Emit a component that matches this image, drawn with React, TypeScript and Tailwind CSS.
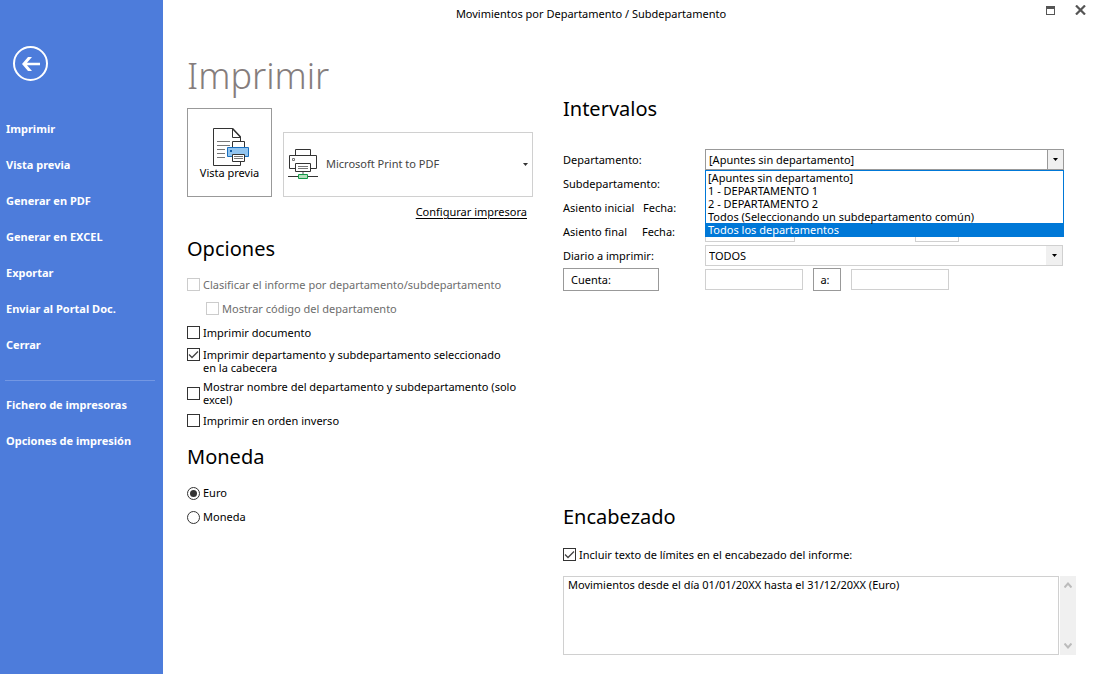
import React, { useState } from "react";

const menuItems = [
  "Imprimir",
  "Vista previa",
  "Generar en PDF",
  "Generar en EXCEL",
  "Exportar",
  "Enviar al Portal Doc.",
  "Cerrar",
];

const settingsItems = ["Fichero de impresoras", "Opciones de impresión"];

const departments = [
  "[Apuntes sin departamento]",
  "1 - DEPARTAMENTO 1",
  "2 - DEPARTAMENTO 2",
  "Todos (Seleccionando un subdepartamento común)",
  "Todos los departamentos",
];

const Sidebar: React.FC = () => {
  return (
    <aside className="w-[163px] shrink-0 bg-[#4d7cdb] pt-[46px] text-white">
      <button
        type="button"
        aria-label="Volver"
        className="ml-[13px] flex size-[35px] items-center justify-center rounded-full border-2 border-white"
      >
        <svg width="18" height="14" viewBox="0 0 18 14" fill="none">
          <path d="M0 7 6 0h4L5 5.8h13v2.4H5L10 14H6z" fill="#fff" />
        </svg>
      </button>
      <nav className="mt-[30px] font-bold">
        {menuItems.map((item) => (
          <a key={item} href="#" className="flex h-9 items-center pl-1.5">
            {item}
          </a>
        ))}
        <hr className="mt-[17px] mb-1.5 ml-[5px] mr-2 border-[#7397e3]" />
        {settingsItems.map((item) => (
          <a key={item} href="#" className="flex h-9 items-center pl-1.5">
            {item}
          </a>
        ))}
      </nav>
    </aside>
  );
};

const TitleBar: React.FC = () => {
  return (
    <header className="flex h-7 items-center">
      <h1 className="flex-1 text-center">
        Movimientos por Departamento / Subdepartamento
      </h1>
      <div className="flex w-[75px] items-center justify-end gap-5 pr-2 pb-2">
        <button type="button" aria-label="Maximizar">
          <svg width="9" height="9" viewBox="0 0 9 9">
            <path d="M0 0h9v9H0zM1 3v5h7V3z" fill="#555" fillRule="evenodd" />
          </svg>
        </button>
        <button type="button" aria-label="Cerrar ventana">
          <svg width="11" height="10" viewBox="0 0 11 10">
            <path d="M1 .5 10 9.5M10 .5 1 9.5" stroke="#555" strokeWidth="2.2" />
          </svg>
        </button>
      </div>
    </header>
  );
};

const PreviewIcon: React.FC = () => {
  return (
    <svg width="37" height="39" viewBox="0 0 37 39" fill="none">
      <path d="M28.500 14V10L20.500 1.500H1.500V38.500H28.500V33" stroke="#333" />
      <path d="M20.500 1.500V10.500H28.500" stroke="#333" />
      <path d="M20.500 1.500 28.500 10" stroke="#333" strokeWidth="1.500" />
      <path
        d="M5 14.500h13M5 18.500h13M5 22.500h8M5 26.500h8M5 30.500h8"
        stroke="#777"
      />
      <path d="M20.500 20.500v-6h12v6" fill="#fff" stroke="#333" />
      <path d="M15.500 20.500h21v9h-21z" fill="#92c5f0" stroke="#1a6fbe" />
      <path d="M18 23h2v2h-2z" fill="#0f5ca8" />
      <path d="M20.500 27.500h12v7h-12z" fill="#fff" stroke="#333" />
      <path d="M22 29.500h9M22 31.500h9" stroke="#777" />
    </svg>
  );
};

const PrinterIcon: React.FC = () => {
  return (
    <svg
      width="30"
      height="31"
      viewBox="0 0 30 31"
      fill="none"
      className="shrink-0"
    >
      <path d="M7.500 6.500v-6h15v6" stroke="#333" />
      <path d="M7 19.500H1.500v-13h27v13H23" stroke="#333" />
      <path d="M4.500 9.500h2v2h-2z" stroke="#777" />
      <path d="M7.500 14.500h15v8h-15z" fill="#fff" stroke="#333" />
      <path d="M10 17.500h10M10 19.500h10" stroke="#777" />
      <path d="M15 23v2" stroke="#aaa" strokeWidth="2" />
      <path d="M0 27.500h10M20 27.500h10" stroke="#333" />
      <path d="M10.500 25.500h9v4h-9z" fill="#b5dfbd" stroke="#149a48" />
    </svg>
  );
};

const Arrow: React.FC = () => {
  return (
    <svg width="5" height="3" viewBox="0 0 5 3">
      <path d="M0 0h5L2.500 3z" fill="currentColor" />
    </svg>
  );
};

type CheckProps = {
  id: string;
  checked?: boolean;
  disabled?: boolean;
  className?: string;
  children: React.ReactNode;
};

const Check: React.FC<CheckProps> = ({
  id,
  checked = false,
  disabled = false,
  className = "",
  children,
}) => {
  return (
    <div className={`flex items-center gap-[3px] ${className}`}>
      <span className="relative size-[13px] shrink-0">
        <input
          id={id}
          type="checkbox"
          defaultChecked={checked}
          disabled={disabled}
          className="peer block size-[13px] appearance-none border border-[#333] bg-white disabled:border-[#ccc]"
        />
        <svg
          viewBox="0 0 13 13"
          fill="none"
          className="pointer-events-none absolute inset-0 hidden size-[13px] peer-checked:block"
        >
          <path d="M2 6.500 5 9.500 11 3.500" stroke="#444" strokeWidth="1.300" />
        </svg>
      </span>
      <label
        htmlFor={id}
        className={disabled ? "leading-[13px] text-[#6d6d6d]" : "leading-[13px]"}
      >
        {children}
      </label>
    </div>
  );
};

type RadioProps = {
  id: string;
  label: string;
  checked?: boolean;
};

const Radio: React.FC<RadioProps> = ({ id, label, checked = false }) => {
  return (
    <div className="flex h-6 items-center gap-[3px]">
      <span className="relative size-[13px] shrink-0">
        <input
          id={id}
          name="moneda"
          type="radio"
          defaultChecked={checked}
          className="peer block size-[13px] appearance-none rounded-full border border-[#333] bg-white"
        />
        <span className="pointer-events-none absolute inset-[3px] hidden rounded-full bg-[#333] peer-checked:block" />
      </span>
      <label htmlFor={id}>{label}</label>
    </div>
  );
};

const PrintPanel: React.FC = () => {
  return (
    <section>
      <h2 className="text-4xl leading-[48px] font-[350] text-[#857d7d]">
        Imprimir
      </h2>
      <div className="mt-2 flex items-end gap-[11px]">
        <button
          type="button"
          className="flex h-[89px] w-[85px] shrink-0 flex-col items-center border border-[#999] pt-[18px]"
        >
          <span className="pl-0.5">
            <PreviewIcon />
          </span>
          <span className="leading-[13px]">Vista previa</span>
        </button>
        <div className="relative flex h-[65px] flex-1 items-center border border-[#d0d0d0] pl-1">
          <PrinterIcon />
          <select
            aria-label="Impresora"
            className="h-full flex-1 appearance-none pl-2 text-[#444]"
          >
            <option>Microsoft Print to PDF</option>
          </select>
          <span className="pointer-events-none absolute right-1 text-[#333]">
            <Arrow />
          </span>
        </div>
      </div>
      <div className="mt-[7px] pr-1.5 text-right leading-4">
        <a href="#" className="underline underline-offset-2">
          Configurar impresora
        </a>
      </div>

      <h3 className="mt-[15px] text-xl leading-7 font-[380]">Opciones</h3>
      <div className="mt-[9px]">
        <Check id="clasificar" disabled className="h-6">
          Clasificar el informe por departamento/subdepartamento
        </Check>
        <Check id="codigo" disabled className="ml-[19px] h-6">
          Mostrar código del departamento
        </Check>
        <Check id="documento" className="h-6">
          Imprimir documento
        </Check>
        <Check id="cabecera" checked className="mt-1 items-start">
          Imprimir departamento y subdepartamento seleccionado
          <br />
          en la cabecera
        </Check>
        <Check id="nombre" className="mt-1.5">
          Mostrar nombre del departamento y subdepartamento (solo
          <br />
          excel)
        </Check>
        <Check id="inverso" className="mt-0.5 h-6">
          Imprimir en orden inverso
        </Check>
      </div>

      <h3 className="mt-[11px] text-xl leading-7 font-[380]">Moneda</h3>
      <div className="mt-2.5">
        <Radio id="euro" label="Euro" checked />
        <Radio id="otra" label="Moneda" />
      </div>
    </section>
  );
};

const DepartmentSelect: React.FC = () => {
  const [active, setActive] = useState(4);

  return (
    <div className="relative mr-3 flex-1">
      <select
        id="departamento"
        className="block h-[21px] w-full appearance-none border border-[#999] pt-px pl-[3px]"
      >
        <option>{departments[0]}</option>
      </select>
      <span className="pointer-events-none absolute top-px right-px bottom-px flex w-4 items-center justify-center border-l border-[#999] bg-[#f0f0f0]">
        <Arrow />
      </span>
      <ul
        role="listbox"
        aria-label="Departamento"
        className="absolute inset-x-0 top-full z-10 border border-[#0078d7] bg-white"
      >
        {departments.map((name, i) => (
          <li
            key={name}
            role="option"
            aria-selected={i === active}
            onMouseEnter={() => setActive(i)}
            className={
              i === active
                ? "bg-[#0078d7] pl-0.5 leading-[13px] text-white"
                : "pl-0.5 leading-[13px]"
            }
          >
            {name}
          </li>
        ))}
      </ul>
    </div>
  );
};

type RowProps = {
  htmlFor: string;
  label: React.ReactNode;
  children: React.ReactNode;
};

const Row: React.FC<RowProps> = ({ htmlFor, label, children }) => {
  return (
    <div className="flex h-6 pt-px pb-0.5">
      <label htmlFor={htmlFor} className="w-[142px] shrink-0 leading-[21px]">
        {label}
      </label>
      {children}
    </div>
  );
};

const IntervalsPanel: React.FC = () => {
  return (
    <section>
      <h3 className="text-xl leading-7 font-[380]">Intervalos</h3>
      <div className="mt-[25px]">
        <Row htmlFor="departamento" label="Departamento:">
          <DepartmentSelect />
        </Row>
        <Row htmlFor="subdepartamento" label="Subdepartamento:">
          <select
            id="subdepartamento"
            className="mr-3 h-[21px] flex-1 appearance-none border border-[#d0d0d0]"
          />
        </Row>
        <Row
          htmlFor="fecha-inicial"
          label={
            <>
              Asiento inicial <span className="ml-1.5">Fecha:</span>
            </>
          }
        >
          <input
            id="fecha-inicial"
            className="h-[21px] w-[90px] border border-[#d0d0d0]"
          />
          <input
            aria-label="Número inicial"
            className="ml-[120px] h-[21px] w-11 border border-[#d0d0d0]"
          />
        </Row>
        <Row
          htmlFor="fecha-final"
          label={
            <>
              Asiento final <span className="ml-3">Fecha:</span>
            </>
          }
        >
          <input
            id="fecha-final"
            className="h-[21px] w-[90px] border border-[#d0d0d0]"
          />
          <input
            aria-label="Número final"
            className="ml-[120px] h-[21px] w-11 border border-[#d0d0d0]"
          />
        </Row>
        <Row htmlFor="diario" label="Diario a imprimir:">
          <div className="relative mr-[13px] flex-1">
            <select
              id="diario"
              className="block h-[21px] w-full appearance-none border border-[#d0d0d0] pt-px pl-[3px]"
            >
              <option>TODOS</option>
            </select>
            <span className="pointer-events-none absolute top-px right-px bottom-px flex w-4 items-center justify-center bg-[#f0f0f0]">
              <Arrow />
            </span>
          </div>
        </Row>
        <div className="flex items-center">
          <button
            type="button"
            className="h-[23px] w-24 border border-[#999] pt-px pl-[7px] text-left"
          >
            Cuenta:
          </button>
          <input
            aria-label="Cuenta inicial"
            className="ml-[46px] h-[21px] w-[98px] border border-[#d0d0d0]"
          />
          <button
            type="button"
            className="mx-2.5 h-[23px] w-7 border border-[#999] pt-px pr-1"
          >
            a:
          </button>
          <input
            aria-label="Cuenta final"
            className="h-[21px] w-[98px] border border-[#d0d0d0]"
          />
        </div>
      </div>
    </section>
  );
};

const HeaderPanel: React.FC = () => {
  return (
    <section className="mt-auto">
      <h3 className="text-xl leading-7 font-[380]">Encabezado</h3>
      <Check id="limites" checked className="mt-[11px] h-6">
        Incluir texto de límites en el encabezado del informe:
      </Check>
      <div className="mt-2.5 flex h-[79px] gap-px">
        <textarea
          aria-label="Texto del encabezado"
          className="flex-1 resize-none overflow-hidden border border-[#d0d0d0] px-1 py-px leading-[13px]"
          defaultValue="Movimientos desde el día 01/01/20XX hasta el 31/12/20XX (Euro)"
        />
        <div className="flex w-4 flex-col items-center justify-between bg-[#f0f0f0] py-1.5">
          <svg width="8" height="6" viewBox="0 0 8 6" fill="none">
            <path d="M.5 5.500 4 1.500 7.500 5.500" stroke="#bbb" strokeWidth="2" />
          </svg>
          <svg width="8" height="6" viewBox="0 0 8 6" fill="none">
            <path d="M.5.500 4 4.500 7.500.500" stroke="#bbb" strokeWidth="2" />
          </svg>
        </div>
      </div>
    </section>
  );
};

const App: React.FC = () => {
  return (
    <div className="flex min-h-screen bg-white font-['Noto_Sans',sans-serif] text-[11px] text-black">
      <Sidebar />
      <div className="flex flex-1 flex-col">
        <TitleBar />
        <main className="grid flex-1 grid-cols-[346px_1fr] gap-x-[30px] pt-6 pr-[18px] pb-[19px] pl-6">
          <PrintPanel />
          <div className="flex flex-col pt-[43px]">
            <IntervalsPanel />
            <HeaderPanel />
          </div>
        </main>
      </div>
    </div>
  );
};

export default App;
